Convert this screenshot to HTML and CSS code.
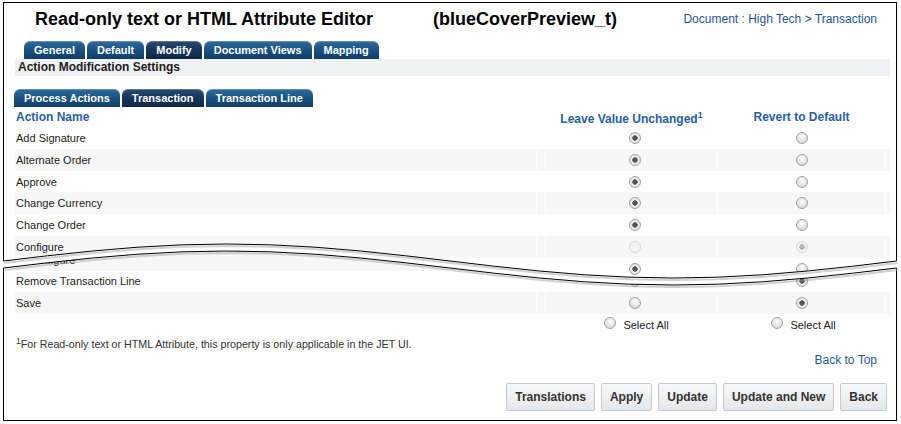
FILE: index.html
```html
<!DOCTYPE html>
<html lang="en">
<head>
<meta charset="utf-8">
<title>Read-only text or HTML Attribute Editor</title>
<link rel="stylesheet" href="styles.css">
</head>
<body>
<div class="sheet">
  <section class="panel panel-top">
    <header class="head">
      <h1 class="title">Read-only text or HTML Attribute Editor</h1>
      <span class="var-id">(blueCoverPreview_t)</span>
      <a class="crumb" href="#">Document : High Tech &gt; Transaction</a>
    </header>
    <nav class="tabs main-tabs">
      <span class="tab">General</span>
      <span class="tab">Default</span>
      <span class="tab is-active">Modify</span>
      <span class="tab">Document Views</span>
      <span class="tab">Mapping</span>
    </nav>
    <div class="section-bar">Action Modification Settings</div>
    <nav class="tabs sub-tabs">
      <span class="tab">Process Actions</span>
      <span class="tab is-active">Transaction</span>
      <span class="tab">Transaction Line</span>
    </nav>
    <table class="actions">
      <colgroup><col class="w-name"><col class="w-sp"><col class="w-c2"><col class="w-c3"><col class="w-end"></colgroup>
      <thead>
        <tr><th class="name">Action Name</th><th class="sp"></th><th class="c2">Leave Value Unchanged<sup>1</sup></th><th class="c3">Revert to Default</th><th class="end"></th></tr>
      </thead>
      <tbody>
        <tr><td class="name">Add Signature</td><td class="sp"></td><td class="c2"><input class="rb" type="radio" checked></td><td class="c3"><input class="rb" type="radio"></td><td class="end"></td></tr>
        <tr class="alt"><td class="name">Alternate Order</td><td class="sp"></td><td class="c2"><input class="rb" type="radio" checked></td><td class="c3"><input class="rb" type="radio"></td><td class="end"></td></tr>
        <tr><td class="name">Approve</td><td class="sp"></td><td class="c2"><input class="rb" type="radio" checked></td><td class="c3"><input class="rb" type="radio"></td><td class="end"></td></tr>
        <tr class="alt"><td class="name">Change Currency</td><td class="sp"></td><td class="c2"><input class="rb" type="radio" checked></td><td class="c3"><input class="rb" type="radio"></td><td class="end"></td></tr>
        <tr><td class="name">Change Order</td><td class="sp"></td><td class="c2"><input class="rb" type="radio" checked></td><td class="c3"><input class="rb" type="radio"></td><td class="end"></td></tr>
        <tr class="alt"><td class="name">Configure</td><td class="sp"></td><td class="c2"><input class="rb" type="radio" disabled></td><td class="c3"><input class="rb" type="radio" checked disabled></td><td class="end"></td></tr>
        <tr><td class="name">Copy Transaction</td><td class="sp"></td><td class="c2"><input class="rb" type="radio" checked></td><td class="c3"><input class="rb" type="radio"></td><td class="end"></td></tr>
      </tbody>
    </table>
  </section>

  <section class="panel panel-bottom">
    <table class="actions">
      <colgroup><col class="w-name"><col class="w-sp"><col class="w-c2"><col class="w-c3"><col class="w-end"></colgroup>
      <tbody>
        <tr class="alt"><td class="name">Reconfigure</td><td class="sp"></td><td class="c2"><input class="rb" type="radio" checked></td><td class="c3"><input class="rb" type="radio"></td><td class="end"></td></tr>
        <tr><td class="name">Remove Transaction Line</td><td class="sp"></td><td class="c2"><input class="rb" type="radio"></td><td class="c3"><input class="rb" type="radio" checked></td><td class="end"></td></tr>
        <tr class="alt"><td class="name">Save</td><td class="sp"></td><td class="c2"><input class="rb" type="radio"></td><td class="c3"><input class="rb" type="radio" checked></td><td class="end"></td></tr>
        <tr class="select-row"><td class="name"></td><td class="sp"></td><td class="c2"><label class="select-all"><input class="rb" type="radio">Select All</label></td><td class="c3"><label class="select-all"><input class="rb" type="radio">Select All</label></td><td class="end"></td></tr>
      </tbody>
    </table>
    <p class="footnote"><sup>1</sup>For Read-only text or HTML Attribute, this property is only applicable in the JET UI.</p>
    <div class="back"><a href="#">Back to Top</a></div>
    <div class="button-bar">
      <button class="btn" type="button">Translations</button>
      <button class="btn" type="button">Apply</button>
      <button class="btn" type="button">Update</button>
      <button class="btn" type="button">Update and New</button>
      <button class="btn" type="button">Back</button>
    </div>
  </section>

  <svg class="tear" width="901" height="419" viewBox="-3 0 901 419" aria-hidden="true">
    <polygon fill="#fff" points="-3,259 0,259 44.7,253.75 89.4,249 134.1,245.25 178.8,242.83 223.5,242 268.2,242.83 312.9,245.25 357.6,249 402.3,253.75 447,259 491.7,264.25 536.4,269 581.1,272.75 625.8,275.17 670.5,276 715.2,275.17 759.9,272.75 804.6,269 849.3,264.25 894,259 897,259 897,266 894,266 849.3,271.25 804.6,276 759.9,279.75 715.2,282.17 670.5,283 625.8,282.17 581.1,279.75 536.4,276 491.7,271.25 447,266 402.3,260.75 357.6,256 312.9,252.25 268.2,249.83 223.5,249 178.8,249.83 134.1,252.25 89.4,256 44.7,260.75 0,266 -3,266"/>
    <g fill="none" stroke="#9a9a9a" stroke-opacity="0.45" stroke-width="2" transform="translate(1 2)">
      <polyline points="0.5,259 44.7,253.75 89.4,249 134.1,245.25 178.8,242.83 223.5,242 268.2,242.83 312.9,245.25 357.6,249 402.3,253.75 447,259 491.7,264.25 536.4,269 581.1,272.75 625.8,275.17 670.5,276 715.2,275.17 759.9,272.75 804.6,269 849.3,264.25 893.5,259"/>
      <polyline points="0.5,266 44.7,260.75 89.4,256 134.1,252.25 178.8,249.83 223.5,249 268.2,249.83 312.9,252.25 357.6,256 402.3,260.75 447,266 491.7,271.25 536.4,276 581.1,279.75 625.8,282.17 670.5,283 715.2,282.17 759.9,279.75 804.6,276 849.3,271.25 893.5,266"/>
    </g>
    <g fill="none" stroke="#000" stroke-width="1">
      <polyline points="0.5,259 44.7,253.75 89.4,249 134.1,245.25 178.8,242.83 223.5,242 268.2,242.83 312.9,245.25 357.6,249 402.3,253.75 447,259 491.7,264.25 536.4,269 581.1,272.75 625.8,275.17 670.5,276 715.2,275.17 759.9,272.75 804.6,269 849.3,264.25 893.5,259"/>
      <polyline points="0.5,266 44.7,260.75 89.4,256 134.1,252.25 178.8,249.83 223.5,249 268.2,249.83 312.9,252.25 357.6,256 402.3,260.75 447,266 491.7,271.25 536.4,276 581.1,279.75 625.8,282.17 670.5,283 715.2,282.17 759.9,279.75 804.6,276 849.3,271.25 893.5,266"/>
    </g>
  </svg>
</div>
</body>
</html>
```

FILE: styles.css
```css
html, body {
  margin: 0;
  background: #fff;
}

body {
  font-family: "Liberation Sans", Arial, sans-serif;
  color: #1c1c1c;
}

.sheet {
  position: relative;
  display: grid;
  grid-template-rows: 419px;
  grid-template-columns: 894px;
  width: 894px;
  height: 419px;
  margin: 2px 0 0 3px;
}

.panel {
  grid-area: 1 / 1;
  box-sizing: border-box;
  background: #fff;
  border-left: 1px solid #000;
  border-right: 1px solid #000;
  padding: 0 6px 0 11px;
  overflow: hidden;
}

.panel-top {
  border-top: 1px solid #000;
}

.panel-bottom {
  border-bottom: 1px solid #000;
  padding-top: 246.8px;
  clip-path: polygon(0 266px, 44.7px 260.75px, 89.4px 256px, 134.1px 252.25px, 178.8px 249.83px, 223.5px 249px, 268.2px 249.83px, 312.9px 252.25px, 357.6px 256px, 402.3px 260.75px, 447px 266px, 491.7px 271.25px, 536.4px 276px, 581.1px 279.75px, 625.8px 282.17px, 670.5px 283px, 715.2px 282.17px, 759.9px 279.75px, 804.6px 276px, 849.3px 271.25px, 894px 266px, 894px 419px, 0 419px);
}

.tear {
  position: absolute;
  left: -3px;
  top: 0;
  pointer-events: none;
}

/* header */
.head {
  display: flex;
  align-items: center;
  height: 32px;
  padding-left: 20px;
}

.title {
  margin: 0;
  font-size: 18px;
  font-weight: bold;
  color: #000;
}

.var-id {
  margin-left: 60px;
  font-size: 18px;
  font-weight: bold;
  color: #000;
}

.crumb {
  margin-left: auto;
  margin-right: 13px;
  font-size: 12px;
  color: #1f5499;
  text-decoration: none;
}

/* tabs */
.tabs {
  display: flex;
  gap: 2px;
}

.main-tabs {
  margin: 6px 0 0 9px;
}

.sub-tabs {
  margin: 13px 0 0 -1px;
}

.tab {
  height: 18px;
  line-height: 18px;
  padding: 0 10px;
  border-radius: 6px 6px 0 0;
  background: linear-gradient(#2f6c9e, #1b5486 45%, #0f3d67);
  box-shadow: inset 0 1px 0 rgba(255, 255, 255, 0.25);
  color: #fff;
  font-size: 11px;
  font-weight: bold;
  white-space: nowrap;
}

.tab.is-active {
  background: linear-gradient(#284a74, #18375e 45%, #0c2747);
}

.section-bar {
  height: 17px;
  line-height: 17px;
  padding-left: 3px;
  background: #f0f1f5;
  font-size: 12px;
  font-weight: bold;
  color: #222;
}

/* table */
.actions {
  width: 875px;
  table-layout: fixed;
  border-collapse: separate;
  border-spacing: 0;
  font-size: 11px;
  color: #1c1c1c;
}

.w-name { width: 521px; }
.w-sp { width: 9px; }
.w-c2 { width: 172px; }
.w-c3 { width: 168px; }
.w-end { width: 5px; }

.actions th {
  height: 20.1px;
  padding: 0;
  font-size: 12px;
  line-height: 14px;
  font-weight: bold;
  color: #2a5e9e;
  text-align: center;
  vertical-align: middle;
  white-space: nowrap;
}

.actions th.name {
  text-align: left;
  padding-left: 1px;
}

.actions th.c2 {
  height: 16.1px;
  padding-top: 4px;
}

.actions sup {
  font-size: 9px;
  line-height: 0;
  vertical-align: 5px;
}

.actions td {
  height: 21.8px;
  padding: 0;
  vertical-align: middle;
}

.actions td.name {
  padding-left: 1px;
  white-space: nowrap;
}

.actions .sp,
.actions .c2,
.actions .c3,
.actions .end {
  border-left: 1px solid #fff;
}

.actions td.c2 {
  padding-left: 6px;
  text-align: center;
}

.actions td.c3 {
  text-align: center;
}

.actions tr.alt td {
  background: #f7f7f7;
}

/* radios */
.rb {
  appearance: none;
  -webkit-appearance: none;
  display: block;
  box-sizing: border-box;
  width: 12px;
  height: 12px;
  margin: 0 auto;
  border: 1px solid #a2a2a2;
  border-radius: 50%;
  background: radial-gradient(circle at 50% 35%, #fbfbfb, #dcdcdc 75%);
}

.rb:checked {
  background: radial-gradient(circle, #555 0 2.4px, #f0f0f0 3px, #d9d9d9 100%);
}

.rb:disabled {
  border-color: #dadada;
  background: #f4f4f4;
}

.rb:disabled:checked {
  background: radial-gradient(circle, #b3b3b3 0 2.4px, #f3f3f3 3px, #ebebeb 100%);
}

.select-all {
  display: inline-flex;
  align-items: center;
  gap: 7px;
  margin-left: 4px;
  font-size: 11px;
  color: #1c1c1c;
}

.select-all .rb {
  margin: 0 0 5px;
}

/* footer */
.footnote {
  margin: 1px 0 0;
  padding-left: 1px;
  font-size: 10.7px;
  line-height: 14px;
  color: #333;
}

.footnote sup {
  font-size: 8.5px;
  line-height: 0;
  vertical-align: 4px;
}

.back {
  margin: 2px 13px 0 0;
  text-align: right;
  font-size: 12px;
  line-height: 14px;
}

.back a {
  color: #1e5a9c;
  text-decoration: none;
}

.button-bar {
  display: flex;
  justify-content: flex-end;
  gap: 6px;
  margin: 16px 3px 0 0;
}

.btn {
  height: 28px;
  padding: 0 8px;
  border: 1px solid #c3cad2;
  border-radius: 2px;
  background: linear-gradient(#f7f8f9, #e4e8ec);
  font-family: "Liberation Sans", Arial, sans-serif;
  font-size: 12px;
  font-weight: bold;
  color: #333;
}
```
